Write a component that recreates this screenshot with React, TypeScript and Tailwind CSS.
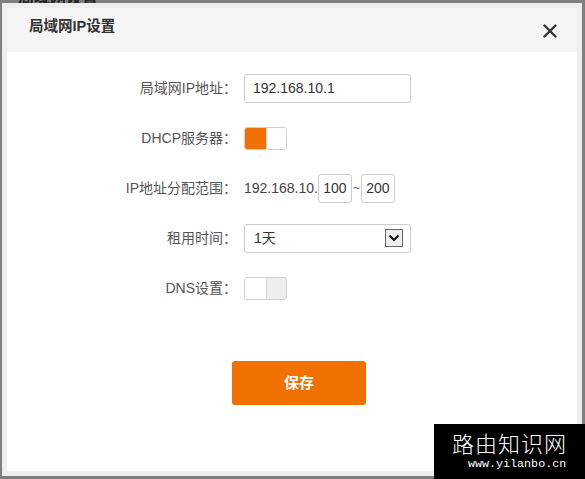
import React from "react";

const font = { fontFamily: '"Liberation Sans", "Noto Sans CJK SC", sans-serif' };

function Row({ label, children }: { label: string; children: React.ReactNode }) {
  return (
    <div className="flex h-[30px] items-center">
      <div className="w-[230px] shrink-0 text-right text-[14px] text-[#555]">{label}</div>
      <div className="ml-[7px] flex items-center">{children}</div>
    </div>
  );
}

function Toggle({ on }: { on: boolean }) {
  return (
    <div className="flex h-[23px] w-[43px] overflow-hidden rounded-[3px] border border-[#d0d0d0]">
      <div className={on ? "w-[21px] bg-[#f07000]" : "w-[21px] bg-white"} />
      <div className={on ? "flex-1 bg-white border-l border-[#d8d8d8]" : "flex-1 bg-[#eeeeee] border-l border-[#d8d8d8]"} />
    </div>
  );
}

export default function App() {
  return (
    <div className="relative h-[479px] w-[585px] overflow-hidden bg-[#7f7f7f]" style={font}>
      <div className="absolute left-[18px] top-[-14px] text-[16px] font-bold text-[#222]">局域网设置</div>
      <div className="relative ml-[2px] mt-[3px] h-[473px] w-[580px] bg-[#eeeeee] p-[5px]">
        <div className="flex h-full flex-col bg-white">
          <div className="flex h-[44px] items-start justify-between bg-[#f5f5f5] pl-[22px] pr-[20px]">
            <div className="pt-[8px] text-[14.5px] font-bold leading-[20px] text-[#333]">局域网IP设置</div>
            <svg className="mt-[16px]" width="14" height="14" viewBox="0 0 14 14">
              <path d="M1.5 1.5 L12.5 12.5 M12.5 1.5 L1.5 12.5" stroke="#333" strokeWidth="2.4" strokeLinecap="round" />
            </svg>
          </div>
          <div className="flex flex-col gap-[20px] pt-[21px]">
            <Row label="局域网IP地址：">
              <div className="flex h-[29px] w-[167px] items-center rounded-[3px] border border-[#cccccc] pl-[8px] text-[14px] text-[#333]">
                192.168.10.1
              </div>
            </Row>
            <Row label="DHCP服务器：">
              <Toggle on={true} />
            </Row>
            <Row label="IP地址分配范围：">
              <span className="text-[14px] text-[#444]">192.168.10.</span>
              <div className="flex h-[29px] w-[34px] items-center justify-center rounded-[3px] border border-[#cccccc] text-[14px] text-[#333]">
                100
              </div>
              <span className="mx-[1px] text-[12px] text-[#555]">~</span>
              <div className="flex h-[29px] w-[34px] items-center justify-center rounded-[3px] border border-[#cccccc] text-[14px] text-[#333]">
                200
              </div>
            </Row>
            <Row label="租用时间：">
              <div className="flex h-[29px] w-[167px] items-center justify-between rounded-[3px] border border-[#cccccc] pl-[9px] pr-[7px] text-[14px] text-[#333]">
                <span>1天</span>
                <div className="flex h-[18px] w-[18px] items-center justify-center border border-[#666] bg-[#eeeeee]">
                  <svg width="12" height="8" viewBox="0 0 12 8">
                    <path d="M1.5 1.5 L6 6 L10.5 1.5" stroke="#111" strokeWidth="2" fill="none" />
                  </svg>
                </div>
              </div>
            </Row>
            <Row label="DNS设置：">
              <Toggle on={false} />
            </Row>
          </div>
          <div className="ml-[225px] mt-[58px] flex h-[44px] w-[134px] items-center justify-center rounded-[3px] bg-[#f07000] text-[15px] font-bold text-white">
            保存
          </div>
        </div>
      </div>
      <div className="absolute bottom-0 right-0 flex h-[55px] w-[151px] flex-col bg-black pl-[18px] pt-[5px]">
        <div className="text-[22px] leading-[26px] tracking-[1px] text-white" style={{ fontFamily: '"Noto Sans CJK SC", sans-serif', fontWeight: 300 }}>
          路由知识网
        </div>
        <div className="pl-[16px] pt-[2px] text-[11.7px] leading-[14px] text-white" style={{ fontFamily: '"Liberation Mono", monospace' }}>
          www.yilanbo.cn
        </div>
      </div>
    </div>
  );
}
